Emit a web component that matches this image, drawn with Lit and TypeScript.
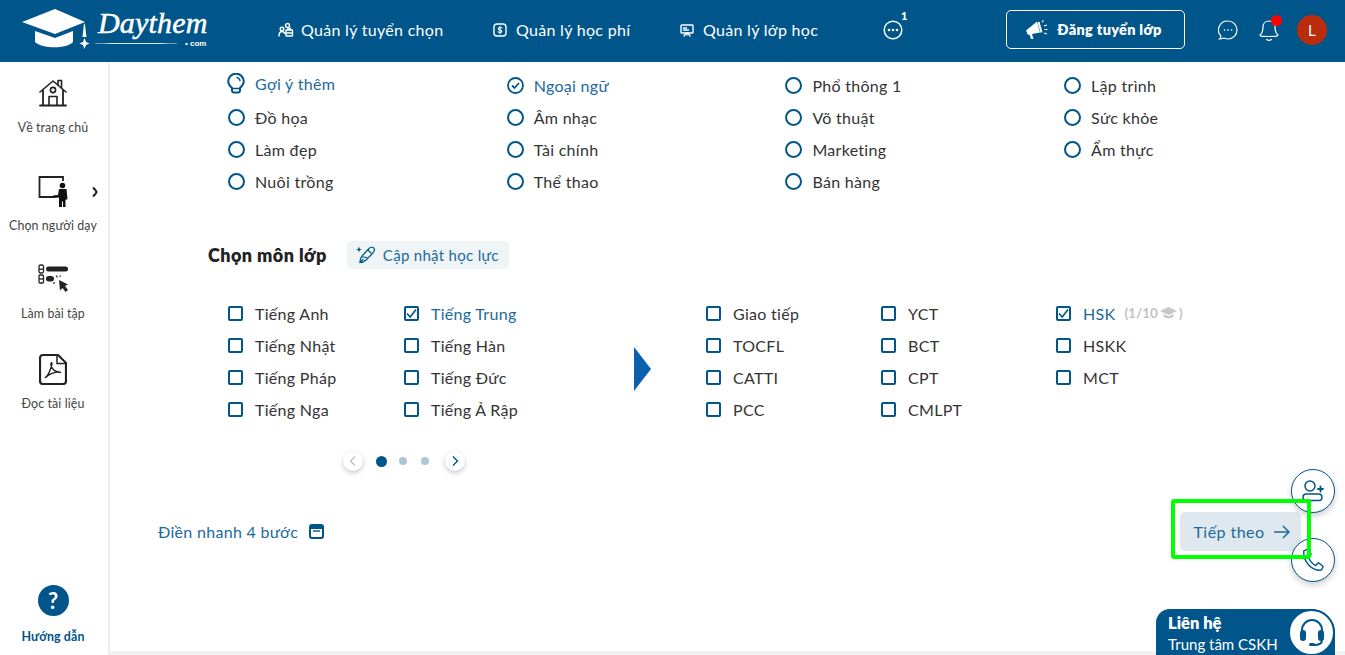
import { LitElement, html, css, svg } from "lit";
import { customElement } from "lit/decorators.js";

const ic = (w: number, h: number, vb: string, body: unknown, cls = "") =>
  html`<svg class=${cls} width=${w} height=${h} viewBox=${vb} fill="none" stroke="currentColor" stroke-width="1.4" stroke-linecap="round" stroke-linejoin="round">${body}</svg>`;

const capIcon = html`<svg class="cap" width="74" height="42" viewBox="0 0 74 42">
  <path d="M0 13 L33 0 L63 13 L33 25 Z" fill="#fff"/>
  <path d="M13 22 L33 29 L51 22 V33 C45 40 20 40 13 33 Z" fill="#fff"/>
  <path d="M62 14 L63 16 L64.500 28 H60.500 Z" fill="#fff"/>
  <path d="M62.500 29 L64 33 L67.500 34.500 L64 36 L62.500 40 L61 36 L57.500 34.500 L61 33 Z" fill="#fff"/>
</svg>`;

const navIcons = {
  people: ic(16, 16, "0 0 16 16", svg`<circle cx="9.500" cy="3.500" r="2"/><circle cx="4" cy="7" r="1.800"/><path d="M1 14c0-3 1-4.500 3-4.500s2.500 1 2.800 2"/><rect x="8" y="8" width="6.500" height="6" rx=".6"/><path d="M8 11h6.500M10 8V6.500h2.500V8"/>`),
  money: ic(14, 14, "0 0 14 14", svg`<rect x="1" y="1" width="12" height="12" rx="3"/><path d="M8.800 5c-.4-.8-3.500-1-3.500.8s3.500 .8 3.500 2.500-3.300 1.500-3.700 .5M7 3.300v7.400" stroke-width="1.100"/>`),
  board: ic(14, 14, "0 0 14 14", svg`<rect x="1" y="2" width="12" height="8" rx=".8"/><path d="M3.500 5h3M3.500 7h5M4 13l2-3M10 13l-2-3M7 10v2"/>`),
};

const home = html`<svg width="28" height="28" viewBox="0 0 28 28" fill="none" stroke="#222" stroke-width="1.600" stroke-linecap="round" stroke-linejoin="round"><path d="M1 13 L14 2 L27 13"/><path d="M19 6V1.500h3.500V9"/><path d="M4 11V26M24 11V26M1 26.500H27" stroke-width="1.800"/><circle cx="14" cy="11" r="2.600"/><path d="M10 26V17.500h8V26"/></svg>`;
const teacher = html`<svg width="31" height="31" viewBox="0 0 31 31" fill="none" stroke="#222"><path d="M25 5V1H1.500V21H16" stroke-width="1.800"/><circle cx="24.500" cy="9.500" r="2.800" fill="#111" stroke="none"/><path d="M15 19.500l5-.5 1-6h7.500l1 10-2 1V31h-2.500v-5.500h-1V31H21V21.500l-6 .5Z" fill="#111" stroke="none"/></svg>`;
const quiz = html`<svg width="31" height="30" viewBox="0 0 31 30"><rect x="1" y="1" width="4.500" height="8" rx="1.500" fill="none" stroke="#222" stroke-width="1.300"/><path d="M1 5.200h4.500" stroke="#222" stroke-width="1.300"/><rect x="8" y="2.500" width="22" height="5" rx="2.500" fill="#222"/><rect x="1" y="11" width="4.500" height="8" rx="1" fill="none" stroke="#222" stroke-width="1.300"/><path d="M1 15h4.500" stroke="#222" stroke-width="1.300"/><rect x="8" y="12" width="8" height="5.500" rx="2.700" fill="#222"/><path d="M21 16l9 4.500-3 1.500 3 4-2.500 2-3-4-2.500 2.500Z" fill="#222"/><path d="M18 11.500l1.500 2M22 11.500l.3 1.500M15 19.500l2-1" stroke="#222" stroke-width="1.200"/></svg>`;
const pdf = html`<svg width="28" height="31" viewBox="0 0 28 31" fill="none" stroke="#222"><path d="M4 1H19L27 9V27a3 3 0 0 1-3 3H4a3 3 0 0 1-3-3V4a3 3 0 0 1 3-3Z" stroke-width="2.200"/><path d="M18 2V9.500H26" fill="#fff" stroke-width="1.500"/><path d="M6 24c3-2 5-6 7-14 0-2-1.500-1.500-1 1 1 5 4 7 10 7.500-4-1-11 0-16 5.500Z" stroke-width="1.400"/></svg>`;

const bulb = html`<svg width="18" height="21" viewBox="0 0 18 21" fill="none" stroke="#00558a"><path d="M5 15C3 13 1.200 11.500 1.200 8.500a7.800 7.800 0 1 1 15.600 0C16.800 11.500 15 13 13 15v2.500a2 2 0 0 1-2 2H7a2 2 0 0 1-2-2Z" stroke-width="2"/><path d="M5.500 15.500h7" stroke-width="1.500"/><path d="M10 4.500a4 4 0 0 1 3 3" stroke-width="1.500" stroke-linecap="round"/></svg>`;

const chipIcon = html`<svg width="20" height="20" viewBox="0 0 20 20" fill="none" stroke="#00558a" stroke-width="1.200" stroke-linejoin="round" stroke-linecap="round"><path d="M3 1.500l.8 2.200 2.200.8-2.200.8L3 7.500l-.8-2.200L0 4.500l2.200-.8Z" fill="#00558a" stroke="none"/><path d="M4 17.500c0-3 1-5.500 3-7.500l6-6.500c2-2 5.500-1.500 5.500 1 0 1.500-1 3-2.500 4.500l-6 6c-2 2-4 2.500-6 2.500Z"/><path d="M7 12l4 .5M4 17.500l3-3M12 5l3 3"/></svg>`;

const radios: string[] = ["Đồ họa", "Âm nhạc", "Võ thuật", "Sức khỏe", "Làm đẹp", "Tài chính", "Marketing", "Ẩm thực", "Nuôi trồng", "Thể thao", "Bán hàng"];
const leftSubj = ["Tiếng Anh", "Tiếng Trung", "Tiếng Nhật", "Tiếng Hàn", "Tiếng Pháp", "Tiếng Đức", "Tiếng Nga", "Tiếng Ả Rập"];
const rightSubj = ["Giao tiếp", "YCT", "HSK", "TOCFL", "BCT", "HSKK", "CATTI", "CPT", "MCT", "PCC", "CMLPT"];

@customElement("app-root")
export class AppRoot extends LitElement {
  static styles = css`
    :host { display: block; width: 1345px; height: 655px; overflow: hidden; position: relative; background: #fff;
      font-family: "Lato", "Noto Sans", sans-serif; font-size: 16px; color: #333; letter-spacing: .3px; }
    * { box-sizing: border-box; }
    svg { display: block; flex: none; }
    .top { height: 62px; background: #00558a; color: #fff; display: flex; align-items: center; padding: 0 0 3px 22px; }
    .logo { display: flex; align-items: flex-start; width: 256px; height: 42px; margin-top: -3px; }
    .cap { margin-top: 2px; }
    .brand { display: flex; flex-direction: column; letter-spacing: 0; margin-left: 2px; }
    .name { font: italic 30px/32px "Liberation Serif", serif; letter-spacing: .2px; -webkit-text-stroke: .5px #fff; }
    .sub { display: flex; align-items: center; gap: 7px; height: 9px; margin-left: -4px; font: 700 8px/9px "Liberation Sans", sans-serif; }
    .sub i { display: block; width: 84px; height: 1.500px; background: #dfe9f0; border-radius: 50%; }
    .nav { display: flex; align-items: center; gap: 7px; color: #fff; }
    .nav.a { width: 215px; }
    .nav.b { width: 187px; gap: 9px; }
    .nav.c { width: 203px; gap: 9px; }
    .more { position: relative; width: 123px; }
    .more b { position: absolute; left: 18px; top: -10px; font: 900 11px/12px "Lato", sans-serif; color: #fff; }
    .post { width: 179px; height: 39px; border: 1px solid #fff; border-radius: 5px; display: flex; align-items: center; justify-content: center; gap: 9px; font-weight: 800; font-size: 14.500px; letter-spacing: .3px; padding-right: 3px; }
    .tools { display: flex; align-items: center; margin-left: 33px; }
    .bell { position: relative; margin-left: 21px; }
    .bell u { position: absolute; right: -3px; top: -4px; width: 11px; height: 11px; border-radius: 50%; background: #f00; }
    .avatar { width: 30px; height: 30px; border-radius: 50%; background: #ba2c0a; display: flex; align-items: center; justify-content: center; margin-left: 18px; font-size: 15px; }
    .body { display: flex; height: 593px; }
    .side { width: 110px; border-right: 2px solid #eeeeee; display: flex; flex-direction: column; align-items: center; padding: 17px 2px 0 0; font-size: 12.400px; color: #444; letter-spacing: .1px; }
    .si { display: flex; flex-direction: column; align-items: center; position: relative; width: 100%; }
    .si .lbl { line-height: 16px; white-space: nowrap; }
    .si.home { height: 97px; gap: 13px; }
    .si.teach { height: 88px; gap: 11px; }
    .si.quiz { height: 90px; gap: 12px; }
    .si.pdf { gap: 11px; }
    .si .arrow { position: absolute; left: 92px; top: 10px; }
    .si.help { margin-top: auto; margin-bottom: 10px; gap: 13px; color: #00558a; font-weight: 700; }
    .q { width: 31px; height: 31px; border-radius: 50%; background: #00558a; color: #fff; font: 700 22px/31px "Lato", sans-serif; text-align: center; }
    .main { flex: 1; padding-top: 7px; display: flex; flex-direction: column; }
    .cats { display: grid; grid-template-columns: repeat(4, 278.700px); grid-auto-rows: 32px; margin-left: 118px; }
    .opt { display: flex; align-items: center; gap: 10px; white-space: nowrap; }
    .radio { width: 17px; height: 17px; border-radius: 50%; border: 2px solid #00558a; flex: none; }
    .sel { color: #1b6a9a; }
    .hint { padding-bottom: 4px; }
    .hint svg { margin-left: -1px; }
    .head { display: flex; align-items: center; gap: 20px; margin: 44px 0 28px 98px; height: 28px; }
    .head h2 { margin: 0; font-size: 18px; font-weight: 800; color: #222; letter-spacing: .43px; white-space: nowrap; }
    .chip { height: 28px; width: 162px; background: #eff4f7; border-radius: 5px; display: flex; align-items: center; gap: 7px; padding-left: 9px; color: #1b6a9a; font-size: 15px; }
    .pick { display: flex; margin-left: 118px; height: 128px; }
    .l { display: grid; grid-template-columns: repeat(2, 176px); grid-auto-rows: 32px; width: 406px; }
    .r { display: grid; grid-template-columns: repeat(3, 175px); grid-auto-rows: 32px; margin-left: 55px; }
    .tri { width: 0; height: 0; align-self: center; border-left: 17px solid #0b60ae; border-top: 22px solid transparent; border-bottom: 22px solid transparent; margin-top: 16px; flex: none; }
    .l .opt, .r .opt { gap: 12px; }
    .box { width: 15px; height: 15px; border: 2px solid #00558a; border-radius: 2px; flex: none; display: flex; align-items: center; justify-content: center; }
    .score { font-size: 13.500px; font-weight: 700; color: #c2c2c2; display: flex; align-items: center; gap: 2px; letter-spacing: 0; margin-left: -3px; }
    .pager { display: flex; align-items: center; margin: 25px 0 0 233px; height: 22px; }
    .arr { width: 20px; height: 20px; border-radius: 50%; background: #fff; box-shadow: 0 2px 5px rgba(0,0,0,.22); display: flex; align-items: center; justify-content: center; color: #00558a; }
    .arr.off { color: #bbb; }
    .dot { width: 8px; height: 8px; border-radius: 50%; background: #abc6d9; margin-left: 14px; }
    .dot.on { width: 11px; height: 11px; background: #00558a; margin-left: 13px; margin-right: -2px; }
    .pager .arr:last-child { margin-left: 16px; }
    .foot { display: flex; align-items: center; justify-content: space-between; margin: 40px 44px 0 48px; height: 39px; color: #1b6a9a; }
    .quick { display: flex; align-items: center; gap: 11px; }
    .next { width: 121px; height: 39px; border-radius: 5px; background: #dfe8ef; display: flex; align-items: center; justify-content: center; gap: 8px; letter-spacing: .45px; padding-left: 2px; }
    .strip { position: absolute; left: 110px; right: 0; bottom: 0; height: 4px; background: #f2f2f2; }
    .green { position: absolute; left: 1171px; top: 499px; width: 140px; height: 60px; border: 4px solid #00ff00; border-radius: 3px; z-index: 3; }
    .fab { position: absolute; left: 1291px; width: 44px; height: 44px; border-radius: 50%; background: #fff; border: 1px solid #00558a; box-shadow: 0 3px 6px rgba(0,0,0,.2); display: flex; align-items: center; justify-content: center; color: #00558a; z-index: 2; }
    .fab.u { top: 469px; }
    .fab.p { top: 538px; }
    .contact { position: absolute; left: 1156px; top: 609px; width: 179px; height: 50px; background: #00558a; border-radius: 14px 24px 0 0; color: #fff; padding: 4px 0 0 12px; z-index: 4; letter-spacing: 0; }
    .contact b { display: block; font-size: 16.500px; line-height: 20px; font-weight: 800; }
    .contact span { display: block; font-size: 15px; line-height: 23px; }
    .head-ic { position: absolute; right: 0; top: 0; width: 47px; height: 47px; border-radius: 50%; background: #fff; border: 2px solid #00558a; display: flex; align-items: center; justify-content: center; }
  `;

  private check = html`<svg width="11" height="11" viewBox="0 0 11 11" fill="none" stroke="#00558a" stroke-width="1.600"><path d="M1 5.500L4.200 9 10 1.500"/></svg>`;

  private boxOpt(t: string, on: boolean, extra?: unknown) {
    return html`<div class="opt ${on ? "sel" : ""}"><span class="box">${on ? this.check : ""}</span>${t}${extra ?? ""}</div>`;
  }

  render() {
    const score = html`<span class="score">(1/10
      <svg width="17" height="12" viewBox="0 0 17 12" fill="#c8c8c8"><path d="M0 4L8.500 0 17 4 8.500 8Z"/><path d="M3.500 7l5 2.300L13.500 7v2.500c-2 2.500-8 2.500-10 0Z"/></svg>)</span>`;
    return html`
      <div class="top">
        <div class="logo">${capIcon}
          <div class="brand"><div class="name">Daythem</div><div class="sub"><i></i>• com</div></div>
        </div>
        <div class="nav a">${navIcons.people}<span>Quản lý tuyển chọn</span></div>
        <div class="nav b">${navIcons.money}<span>Quản lý học phí</span></div>
        <div class="nav c">${navIcons.board}<span>Quản lý lớp học</span></div>
        <div class="nav more">
          <svg width="20" height="20" viewBox="0 0 20 20" fill="none" stroke="#fff" stroke-width="1.500"><circle cx="10" cy="10" r="8.800"/><circle cx="6" cy="10" r="1.300" fill="#fff" stroke="none"/><circle cx="10" cy="10" r="1.300" fill="#fff" stroke="none"/><circle cx="14" cy="10" r="1.300" fill="#fff" stroke="none"/></svg>
          <b>1</b>
        </div>
        <div class="post">
          <svg width="22" height="21" viewBox="0 0 22 21" fill="#fff"><path d="M0 11.500L11 2.500l3 11-8 1.500 1.500 5H5L3.500 15.500l-1.500.5Z"/><path d="M12.500 3l3 10.500" stroke="#fff" stroke-width="2"/><path d="M16 3l1.500-1.500M18 7l3-1M18.500 10.500h3M18 14l3 1" stroke="#fff" stroke-width="1.100" fill="none"/></svg>
          <span>Đăng tuyển lớp</span>
        </div>
        <div class="tools">
          <svg width="20" height="20" viewBox="0 0 20 20" fill="none" stroke="#fff" stroke-width="1.200" stroke-linecap="round"><path d="M10 1a9 9 0 0 1 0 18c-2 0-3-.5-4-1-1 .5-3 1-4.500 1 1-1 1.500-2 1.300-3A9 9 0 0 1 10 1Z"/><path d="M6.500 10h.2M10 10h.2M13.500 10h.2" stroke-width="1.500"/></svg>
          <div class="bell">
            <svg width="20" height="22" viewBox="0 0 20 22" fill="none" stroke="#fff" stroke-width="1.200" stroke-linecap="round"><path d="M10 2c-4 0-6 3-6 6 0 4-.5 6-3 8 0 1 .5 1.500 9 1.500s9-.5 9-1.500c-2.500-2-3-4-3-8 0-3-2-6-6-6Z"/><path d="M7.500 20.500c1.500 1 3.500 1 5 0"/></svg>
            <u></u>
          </div>
          <div class="avatar">L</div>
        </div>
      </div>
      <div class="body">
        <div class="side">
          <div class="si home">${home}<span class="lbl">Về trang chủ</span></div>
          <div class="si teach">${teacher}
            <svg class="arrow" width="6" height="12" viewBox="0 0 6 12" fill="none" stroke="#222" stroke-width="2"><path d="M1 1.500C3 3.500 4.300 5 4.500 6 4.300 7 3 8.500 1 10.500"/></svg>
            <span class="lbl">Chọn người dạy</span></div>
          <div class="si quiz">${quiz}<span class="lbl">Làm bài tập</span></div>
          <div class="si pdf">${pdf}<span class="lbl">Đọc tài liệu</span></div>
          <div class="si help"><div class="q">?</div><span class="lbl">Hướng dẫn</span></div>
        </div>
        <div class="main">
          <div class="cats">
            <div class="opt sel hint">${bulb}Gợi ý thêm</div>
            <div class="opt sel"><svg width="17" height="17" viewBox="0 0 17 17" fill="none" stroke="#00558a" stroke-width="1.800"><circle cx="8.500" cy="8.500" r="7.500"/><path d="M5 8.500l2.500 2.500 4.500-5"/></svg>Ngoại ngữ</div>
            <div class="opt"><span class="radio"></span>Phổ thông 1</div>
            <div class="opt"><span class="radio"></span>Lập trình</div>
            ${radios.map((t) => html`<div class="opt"><span class="radio"></span>${t}</div>`)}
          </div>
          <div class="head"><h2>Chọn môn lớp</h2><div class="chip">${chipIcon}<span>Cập nhật học lực</span></div></div>
          <div class="pick">
            <div class="l">${leftSubj.map((t) => this.boxOpt(t, t === "Tiếng Trung"))}</div>
            <div class="tri"></div>
            <div class="r">${rightSubj.map((t) => this.boxOpt(t, t === "HSK", t === "HSK" ? score : ""))}</div>
          </div>
          <div class="pager">
            <div class="arr off"><svg width="8" height="12" viewBox="0 0 8 12" fill="none" stroke="currentColor" stroke-width="1.200"><path d="M6 1.500L1.500 6 6 10.500"/></svg></div>
            <div class="dot on"></div><div class="dot"></div><div class="dot"></div>
            <div class="arr"><svg width="8" height="12" viewBox="0 0 8 12" fill="none" stroke="currentColor" stroke-width="1.400"><path d="M2 1.500L6.500 6 2 10.500"/></svg></div>
          </div>
          <div class="foot">
            <div class="quick">Điền nhanh 4 bước
              <svg width="15" height="15" viewBox="0 0 15 15" fill="none" stroke="#00558a"><rect x="1" y="1" width="13" height="13" rx="2" stroke-width="2"/><path d="M1 3.500h13" stroke-width="3"/><path d="M4 7h7" stroke-width="1.400"/></svg>
            </div>
            <div class="next">Tiếp theo
              <svg width="17" height="14" viewBox="0 0 17 14" fill="none" stroke="#1b6a9a" stroke-width="1.500"><path d="M1 7h15M10 1l6 6-6 6"/></svg>
            </div>
          </div>
        </div>
      </div>
      <div class="strip"></div>
      <div class="fab u">
        <svg width="32" height="32" viewBox="0 0 32 32" fill="none" stroke="#00558a" stroke-width="1.500" stroke-linecap="round"><circle cx="13" cy="11" r="5"/><path d="M21 14h5M23.500 11.500v5" stroke-width="1.800"/><rect x="6" y="19" width="19" height="6.500" rx="3.250"/></svg>
      </div>
      <div class="fab p">
        <svg width="24" height="24" viewBox="0 0 26 26" fill="none" stroke="#00558a" stroke-width="1.500" stroke-linejoin="round"><path d="M3 3l5-2 3 6-3 2c1 4 4 8 8 10l3-3 5 4-2 4c-10 1-20-9-19-21Z"/></svg>
      </div>
      <div class="green"></div>
      <div class="contact">
        <b>Liên hệ</b><span>Trung tâm CSKH</span>
        <div class="head-ic">
          <svg width="30" height="32" viewBox="0 0 30 32" fill="none" stroke="#00558a" stroke-width="2"><path d="M5 16V13a10 10 0 0 1 20 0v3"/><rect x="3" y="13" width="6" height="11" rx="3" fill="#00558a" stroke="none"/><rect x="21" y="13" width="6" height="11" rx="3" fill="#00558a" stroke="none"/><path d="M25 23c0 3-3 5-8 5" /><rect x="12" y="26" width="6" height="3" rx="1.500" fill="#00558a" stroke="none"/></svg>
        </div>
      </div>
    `;
  }
}
